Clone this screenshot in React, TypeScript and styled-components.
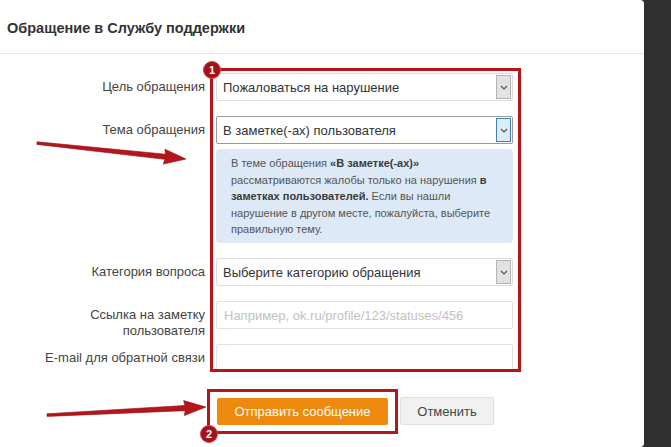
import styled, { createGlobalStyle } from "styled-components";

const GlobalStyle = createGlobalStyle`
  html, body {
    margin: 0;
    padding: 0;
    background: #2f2f2f;
  }
  * {
    box-sizing: border-box;
  }
`;

const RED = "#b5161c";

const Arrow = ({ x1, y1, x2, y2 }: { x1: number; y1: number; x2: number; y2: number }) => {
  const len = Math.hypot(x2 - x1, y2 - y1);
  const angle = (Math.atan2(y2 - y1, x2 - x1) * 180) / Math.PI;
  const h = 21;
  return (
    <g transform={`translate(${x1} ${y1}) rotate(${angle})`}>
      <polygon
        points={`0,-1.2 ${len - h},-2.6 ${len - h - 1},-7.5 ${len},0 ${len - h - 1},7.5 ${len - h},2.6 0,1.4`}
        fill={RED}
        stroke="#8e1015"
        strokeWidth="0.6"
        strokeLinejoin="round"
      />
    </g>
  );
};

const Chevron = () => (
  <svg width="8" height="5" viewBox="0 0 8 5">
    <path d="M1 1 L4 4 L7 1" fill="none" stroke="#555" strokeWidth="1.2" />
  </svg>
);

const App = () => {
  return (
    <>
      <GlobalStyle />
      <Page>
        <Modal>
          <Header>Обращение в Службу поддержки</Header>
          <Body>
            <Form>
              <Label $row={1}>Цель обращения</Label>
              <Select $row={1}>
                <span>Пожаловаться на нарушение</span>
                <ArrowBox>
                  <Chevron />
                </ArrowBox>
              </Select>

              <Label $row={2}>Тема обращения</Label>
              <Select $row={2} $focused>
                <span>В заметке(-ах) пользователя</span>
                <ArrowBox $focused>
                  <Chevron />
                </ArrowBox>
              </Select>

              <InfoBox>
                <p>
                  В теме обращения <b>«В заметке(-ах)»</b>
                </p>
                <p>
                  рассматриваются жалобы только на нарушения <b>в</b>
                </p>
                <p>
                  <b>заметках пользователей.</b> Если вы нашли
                </p>
                <p>нарушение в другом месте, пожалуйста, выберите</p>
                <p>правильную тему.</p>
              </InfoBox>

              <Label $row={4}>Категория вопроса</Label>
              <Select $row={4}>
                <span>Выберите категорию обращения</span>
                <ArrowBox>
                  <Chevron />
                </ArrowBox>
              </Select>

              <Label $row={5}>
                Ссылка на заметку
                <br />
                пользователя
              </Label>
              <Input $row={5} placeholder="Например, ok.ru/profile/123/statuses/456" />

              <Label $row={6}>E-mail для обратной связи</Label>
              <Input $row={6} />

              <Frame>
                <Badge $corner="top">1</Badge>
              </Frame>
            </Form>

            <Buttons>
              <Highlight>
                <PrimaryButton>Отправить сообщение</PrimaryButton>
                <Badge $corner="bottom">2</Badge>
              </Highlight>
              <SecondaryButton>Отменить</SecondaryButton>
            </Buttons>
          </Body>

          <Overlay width="644" height="447" viewBox="0 0 644 447">
            <Arrow x1={37} y1={143} x2={186} y2={159} />
            <Arrow x1={47} y1={415} x2={206} y2={407} />
          </Overlay>
        </Modal>
        <Backdrop />
      </Page>
    </>
  );
};

export default App;

const Page = styled.div`
  display: flex;
  width: 671px;
  height: 447px;
  overflow: hidden;
  font-family: "Liberation Sans", Arial, sans-serif;
`;

const Modal = styled.div`
  position: relative;
  width: 644px;
  height: 447px;
  background: #fff;
  border-radius: 0 4px 4px 0;
  flex-shrink: 0;
`;

const Backdrop = styled.div`
  flex: 1;
  background: #2f2f2f;
`;

const Header = styled.div`
  height: 54px;
  display: flex;
  align-items: center;
  padding: 2px 0 0 7px;
  border-bottom: 1px solid #e6e6e6;
  color: #333;
  font-size: 14.5px;
  font-weight: bold;
`;

const Body = styled.div`
  padding-top: 19px;
`;

const Form = styled.div`
  display: grid;
  grid-template-columns: 205px 297px;
  grid-template-rows: 28px 28px 84px 28px 28px 27px;
  column-gap: 11px;
  row-gap: 15px;
`;

const Label = styled.div<{ $row: number }>`
  grid-column: 1;
  grid-row: ${(p) => p.$row};
  height: 28px;
  padding-top: 6px;
  text-align: right;
  color: #444;
  font-size: 13px;
  line-height: 16px;
  white-space: nowrap;
`;

const Select = styled.div<{ $row: number; $focused?: boolean }>`
  grid-column: 2;
  grid-row: ${(p) => p.$row};
  display: flex;
  align-items: center;
  justify-content: space-between;
  padding: 1px 1px 1px 6px;
  border: 1px solid ${(p) => (p.$focused ? "#9a9a9a" : "#dedede")};
  border-radius: 2px;
  color: #333;
  font-size: 13px;
  background: #fff;
`;

const ArrowBox = styled.div<{ $focused?: boolean }>`
  width: 15px;
  height: 100%;
  display: flex;
  align-items: center;
  justify-content: center;
  border: 1px solid ${(p) => (p.$focused ? "#3c7fb1" : "#b4b4b4")};
  background: ${(p) => (p.$focused ? "#dcecfa" : "#e2e2e2")};
`;

const InfoBox = styled.div`
  grid-column: 2;
  grid-row: 3;
  margin-top: -10px;
  height: 94px;
  padding: 6px 10px 0 15px;
  border-radius: 4px;
  background: #dde9f6;
  color: #555;
  font-size: 11px;
  line-height: 16.5px;
  white-space: nowrap;

  p {
    margin: 0;
  }

  b {
    color: #3a3a3a;
  }
`;

const Input = styled.input<{ $row: number }>`
  grid-column: 2;
  grid-row: ${(p) => p.$row};
  width: 100%;
  height: 100%;
  padding: 0 7px;
  border: 1px solid #e2e2e2;
  border-radius: 2px;
  font-family: "Liberation Sans", Arial, sans-serif;
  font-size: 13px;
  color: #333;
  outline: none;

  &::placeholder {
    color: #c2c2c2;
  }
`;

const Frame = styled.div`
  position: relative;
  grid-column: 2;
  grid-row: 1 / 7;
  margin: -5px -8px -1px -6px;
  border: 3px solid ${RED};
  pointer-events: none;
`;

const Badge = styled.span<{ $corner: "top" | "bottom" }>`
  position: absolute;
  left: -10px;
  ${(p) => (p.$corner === "top" ? "top: -10px;" : "bottom: -12px;")}
  width: 18px;
  height: 18px;
  border-radius: 50%;
  background: #a3121a;
  border: 1px solid #d0454a;
  color: #fff;
  font-size: 11px;
  font-weight: bold;
  display: flex;
  align-items: center;
  justify-content: center;
`;

const Buttons = styled.div`
  display: flex;
  align-items: center;
  gap: 12px;
  margin-top: 26px;
  padding-left: 217px;
`;

const Highlight = styled.div`
  position: relative;
  margin: -9px -10px;
  padding: 6px 7px;
  border: 3px solid ${RED};
`;

const PrimaryButton = styled.button`
  display: block;
  width: 171px;
  height: 27px;
  border: none;
  border-radius: 2px;
  background: #ee8a0e;
  color: #fff;
  font-family: "Liberation Sans", Arial, sans-serif;
  font-size: 13px;
`;

const SecondaryButton = styled.button`
  width: 94px;
  height: 28px;
  border: 1px solid #e0e0e0;
  border-radius: 2px;
  background: #f1f1f1;
  color: #444;
  font-family: "Liberation Sans", Arial, sans-serif;
  font-size: 13px;
`;

const Overlay = styled.svg`
  position: absolute;
  top: 0;
  left: 0;
  pointer-events: none;
`;
